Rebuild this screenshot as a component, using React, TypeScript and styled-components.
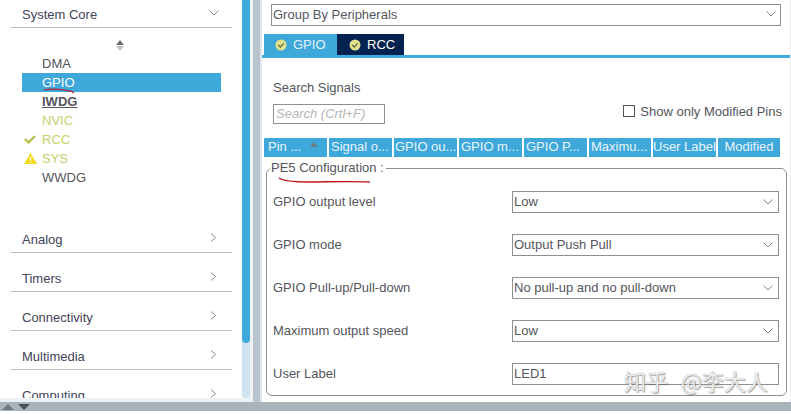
import React from 'react';
import styled, { createGlobalStyle } from 'styled-components';

const Global = createGlobalStyle`
  html, body { margin: 0; padding: 0; background: #fff; }
  body { font-family: "Liberation Sans", Arial, sans-serif; font-size: 13px; color: #55555c; }
  * { box-sizing: border-box; }
`;

const BLUE = '#3ea8da';

const Page = styled.div`
  position: relative;
  width: 791px;
  height: 414px;
  overflow: hidden;
  background: #fff;
`;

const Main = styled.div`
  display: flex;
  height: 402px;
  overflow: hidden;
  background: #eff2f4;
`;

const BottomBar = styled.div`
  display: flex;
  align-items: flex-end;
  gap: 4px;
  height: 9px;
  padding: 0 0 1px 2px;
  background: #a9b3ba;
`;

const Arrow = styled.span<{ $up?: boolean }>`
  width: 0;
  height: 0;
  border-left: 6px solid transparent;
  border-right: 6px solid transparent;
  ${p => (p.$up ? 'border-bottom: 6px solid #707a80;' : 'border-top: 6px solid #4a5258;')}
`;

const Sidebar = styled.aside`
  width: 242px;
  height: 398px;
  flex: none;
  overflow: hidden;
  padding-left: 11px;
  background: #fff;
`;

const Category = styled.div`
  display: flex;
  align-items: flex-end;
  justify-content: space-between;
  width: 221px;
  height: 39px;
  padding: 0 15px 4px 11px;
  border-bottom: 1px solid #b9bfc3;
  line-height: 16px;
  color: #43435a;

  svg {
    margin-bottom: 6px;
  }
`;

const TopCategory = styled(Category)`
  height: 28px;
  padding-right: 13px;

  svg {
    margin-bottom: 7px;
  }
`;

const SortIcon = styled.div`
  display: flex;
  flex-direction: column;
  align-items: center;
  gap: 1px;
  width: 12px;
  height: 11px;
  margin: 12px 0 0 103px;
`;

const Tri = styled.span<{ $up?: boolean }>`
  width: 0;
  height: 0;
  border-left: 4px solid transparent;
  border-right: 4px solid transparent;
  ${p => (p.$up ? 'border-bottom: 5px solid #6a6f72;' : 'border-top: 5px solid #c2c6c8;')}
`;

const PeriphList = styled.ul`
  list-style: none;
  margin: 3px 0 27px 11px;
  padding: 0;
  width: 199px;
`;

const Periph = styled.li<{ $selected?: boolean; $bold?: boolean; $ok?: boolean }>`
  position: relative;
  height: 19px;
  padding-left: 20px;
  line-height: 19px;
  color: ${p => (p.$selected ? '#fff' : p.$ok ? '#c6d06a' : '#55555c')};
  background: ${p => (p.$selected ? BLUE : 'transparent')};
  font-weight: ${p => (p.$bold ? 700 : 400)};
  text-decoration: ${p => (p.$bold ? 'underline' : 'none')};
`;

const PeriphIcon = styled.svg<{ $top: number }>`
  position: absolute;
  left: 2px;
  top: ${p => p.$top}px;
`;

const ScrollTrack = styled.div`
  width: 8px;
  flex: none;
  height: 398px;
  background: #cfe4f3;
  border-radius: 0 0 4px 4px;
`;

const ScrollThumb = styled.div`
  height: 343px;
  background: ${BLUE};
  border-radius: 0 0 4px 4px;
`;

const Splitter = styled.div`
  width: 7px;
  flex: none;
  margin-left: 3px;
  background: #b9c3cb;
`;

const Content = styled.section`
  flex: 1;
  min-width: 0;
  border-left: 2px solid #dfe7ec;
  border-right: 1px solid #e6ecef;
  background: #fff;
`;

const GroupBy = styled.div`
  display: flex;
  align-items: center;
  justify-content: space-between;
  height: 22px;
  margin: 4px 9px 0 9px;
  padding: 0 4px 2px 1px;
  border: 1px solid #8f8f8f;
`;

const Tabs = styled.div`
  display: flex;
  height: 24px;
  margin-top: 8px;
  padding-left: 2px;
  border-bottom: 3px solid ${BLUE};
`;

const Tab = styled.div<{ $dark?: boolean }>`
  display: flex;
  align-items: center;
  gap: 6px;
  width: ${p => (p.$dark ? '67px' : '73px')};
  padding-left: ${p => (p.$dark ? '12px' : '11px')};
  color: ${p => (p.$dark ? '#fff' : '#e4f3fb')};
  background: ${p => (p.$dark ? '#04224f' : BLUE)};
`;

const SearchArea = styled.div`
  display: flex;
  align-items: flex-end;
  justify-content: space-between;
  height: 66px;
  padding: 0 8px 0 11px;
`;

const SearchLabel = styled.div`
  line-height: 16px;
  margin-bottom: 8px;
`;

const SearchInput = styled.div`
  width: 112px;
  height: 20px;
  padding-left: 2px;
  border: 1px solid #8f8f8f;
  line-height: 18px;
  font-style: italic;
  color: #b5b5b5;
`;

const ModifiedOnly = styled.label`
  display: flex;
  align-items: center;
  gap: 5px;
  height: 20px;
  margin-bottom: 3px;
  white-space: nowrap;
`;

const Check = styled.span`
  width: 12px;
  height: 12px;
  border: 1px solid #555;
`;

const HeaderRow = styled.div`
  display: flex;
  gap: 2px;
  height: 19px;
  margin: 14px 0 0 2px;
`;

const HeaderCell = styled.div<{ $w: number; $pad: number; $center?: boolean }>`
  position: relative;
  width: ${p => p.$w}px;
  overflow: hidden;
  padding-left: ${p => p.$pad}px;
  text-align: ${p => (p.$center ? 'center' : 'left')};
  line-height: 18px;
  white-space: nowrap;
  color: #e8f5fc;
  background: ${BLUE};
`;

const HeaderSort = styled.span`
  position: absolute;
  right: 9px;
  top: 4px;
  width: 0;
  height: 0;
  border-left: 4px solid transparent;
  border-right: 4px solid transparent;
  border-bottom: 5px solid #6a7d88;
`;

const Config = styled.fieldset`
  display: block;
  width: 521px;
  height: 236px;
  margin: 3px 0 0 4px;
  padding: 0;
  border: 1px solid #8f8f8f;
  border-radius: 6px;
`;

const ConfigTitle = styled.legend`
  margin-left: 3px;
  padding: 0 2px 0 1px;
  line-height: 16px;
`;

const ConfigBody = styled.div`
  display: flex;
  flex-direction: column;
  padding: 4px 7px 0 6px;
`;

const ConfigRow = styled.div`
  display: flex;
  align-items: center;
  justify-content: space-between;
  height: 43px;
`;

const Field = styled.div`
  display: flex;
  align-items: center;
  justify-content: space-between;
  width: 267px;
  height: 22px;
  padding: 0 5px 0 1px;
  border: 1px solid #8f8f8f;
`;

const Ink = styled.svg`
  position: absolute;
  left: 0;
  top: 0;
  pointer-events: none;
`;

const Watermark = styled.div`
  position: absolute;
  left: 624px;
  top: 367px;
  font-family: "Noto Sans CJK SC", sans-serif;
  font-size: 22px;
  line-height: 26px;
  word-spacing: 8px;
  white-space: nowrap;
  color: rgba(255, 255, 255, 0.85);
  text-shadow: 0 0 1px #8a8a8a, 1px 1px 1px rgba(90, 90, 90, 0.55);
`;

const Down = () => (
  <svg width="10" height="6" viewBox="0 0 10 6">
    <path d="M.5.5L5 5 9.5.5" fill="none" stroke="#858585" strokeWidth="1" />
  </svg>
);

const Right = () => (
  <svg width="7" height="9" viewBox="0 0 7 9">
    <path d="M1 .5l4.5 4L1 8.500" fill="none" stroke="#8a8a8a" strokeWidth="1" />
  </svg>
);

const TabCheck = () => (
  <svg width="12" height="12" viewBox="0 0 12 12">
    <circle cx="6" cy="6" r="5.5" fill="#e3e28c" />
    <path d="M3.3 6l2 2 3.400-3.600" fill="none" stroke="#5f6b4a" strokeWidth="1.3" />
  </svg>
);

const peripherals = [
  { name: 'DMA' },
  { name: 'GPIO', selected: true },
  { name: 'IWDG', bold: true },
  { name: 'NVIC', ok: true },
  { name: 'RCC', ok: true, icon: 'check' },
  { name: 'SYS', ok: true, icon: 'warn' },
  { name: 'WWDG' },
];

const columns = [
  { label: 'Pin ...', w: 63, pad: 4, sort: true },
  { label: 'Signal o...', w: 63, pad: 2 },
  { label: 'GPIO ou...', w: 63, pad: 1 },
  { label: 'GPIO m...', w: 63, pad: 2 },
  { label: 'GPIO P...', w: 63, pad: 2 },
  { label: 'Maximu...', w: 62, pad: 2 },
  { label: 'User Label', w: 63, pad: 0 },
  { label: 'Modified', w: 62, pad: 0, center: true },
];

const config = [
  { label: 'GPIO output level', value: 'Low', select: true },
  { label: 'GPIO mode', value: 'Output Push Pull', select: true },
  { label: 'GPIO Pull-up/Pull-down', value: 'No pull-up and no pull-down', select: true },
  { label: 'Maximum output speed', value: 'Low', select: true },
  { label: 'User Label', value: 'LED1', select: false },
];

export default function App() {
  return (
    <Page>
      <Global />
      <Main>
        <Sidebar>
          <TopCategory>
            System Core
            <Down />
          </TopCategory>
          <SortIcon>
            <Tri $up />
            <Tri />
          </SortIcon>
          <PeriphList>
            {peripherals.map(p => (
              <Periph key={p.name} $selected={p.selected} $bold={p.bold} $ok={p.ok}>
                {p.icon === 'check' && (
                  <PeriphIcon $top={5} width="12" height="9" viewBox="0 0 12 9">
                    <path d="M1 4l3.500 3.500L11 1" fill="none" stroke="#b3bf3a" strokeWidth="2.2" />
                  </PeriphIcon>
                )}
                {p.icon === 'warn' && (
                  <PeriphIcon $top={4} width="13" height="11" viewBox="0 0 13 11">
                    <path d="M6.500 0L13 11H0z" fill="#f4d81c" />
                    <path d="M6.500 3.500v4M6.500 8.500V10" stroke="#fff" strokeWidth="1.300" />
                  </PeriphIcon>
                )}
                {p.name}
              </Periph>
            ))}
          </PeriphList>
          {['Analog', 'Timers', 'Connectivity', 'Multimedia', 'Computing'].map(name => (
            <Category key={name}>
              {name}
              <Right />
            </Category>
          ))}
        </Sidebar>
        <ScrollTrack>
          <ScrollThumb />
        </ScrollTrack>
        <Splitter />
        <Content>
          <GroupBy>
            Group By Peripherals
            <Down />
          </GroupBy>
          <Tabs>
            <Tab>
              <TabCheck />
              GPIO
            </Tab>
            <Tab $dark>
              <TabCheck />
              RCC
            </Tab>
          </Tabs>
          <SearchArea>
            <div>
              <SearchLabel>Search Signals</SearchLabel>
              <SearchInput>Search (Crtl+F)</SearchInput>
            </div>
            <ModifiedOnly>
              <Check />
              Show only Modified Pins
            </ModifiedOnly>
          </SearchArea>
          <HeaderRow>
            {columns.map(c => (
              <HeaderCell key={c.label} $w={c.w} $pad={c.pad} $center={c.center}>
                {c.label}
                {c.sort && <HeaderSort />}
              </HeaderCell>
            ))}
          </HeaderRow>
          <Config>
            <ConfigTitle>PE5 Configuration :</ConfigTitle>
            <ConfigBody>
              {config.map(c => (
                <ConfigRow key={c.label}>
                  {c.label}
                  <Field>
                    {c.value}
                    {c.select && <Down />}
                  </Field>
                </ConfigRow>
              ))}
            </ConfigBody>
          </Config>
        </Content>
      </Main>
      <BottomBar>
        <Arrow $up />
        <Arrow />
      </BottomBar>
      <Ink width="791" height="414" viewBox="0 0 791 414">
        <path d="M44 90c6-1 14-1 20 0s8 1 10 3" fill="none" stroke="#b5222c" strokeWidth="1.2" />
        <path d="M279 178c4 3 12 4 30 4s40-1 61 0" fill="none" stroke="#c2141c" strokeWidth="1.4" />
      </Ink>
      <Watermark>知乎 @李大人</Watermark>
    </Page>
  );
}
